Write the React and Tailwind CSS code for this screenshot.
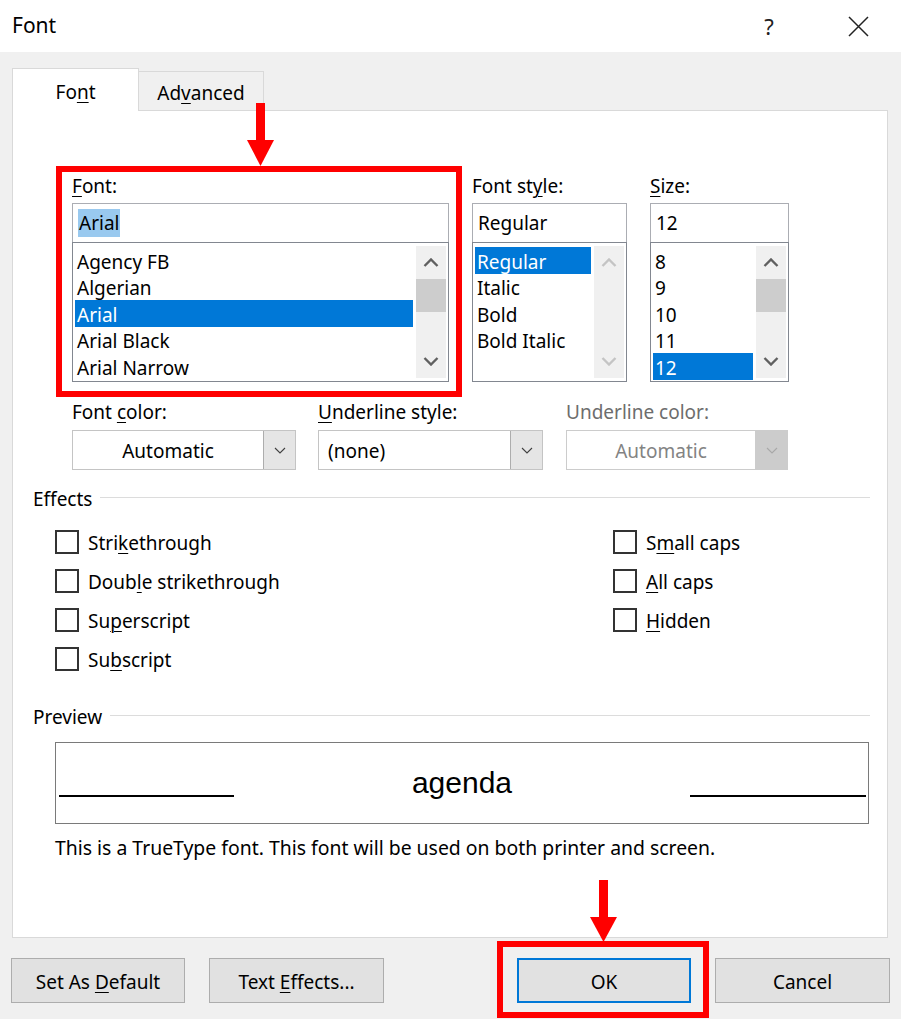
import React from "react";

const U = ({ children }) => (
  <span className="underline underline-offset-[3px] decoration-1">{children}</span>
);

function Chevron({ up, color }) {
  return (
    <svg width="16" height="9" viewBox="0 0 16 9">
      <path
        d={up ? "M1.5 8 L8 1.5 L14.5 8" : "M1.5 1 L8 7.5 L14.5 1"}
        fill="none"
        stroke={color}
        strokeWidth="2.4"
      />
    </svg>
  );
}

function Scrollbar({ thumb = true, disabled = false }) {
  const c = disabled ? "#c4c4c4" : "#606060";
  return (
    <div className="w-[30px] h-full bg-[#f0f0f0] flex flex-col">
      <div className="h-[33px] flex items-center justify-center">
        <Chevron up color={c} />
      </div>
      {thumb && <div className="h-[33px] bg-[#cdcdcd]" />}
      <div className="flex-1" />
      <div className="h-[33px] flex items-center justify-center">
        <Chevron color={c} />
      </div>
    </div>
  );
}

function ListBox({ items, selected, thumb, disabled }) {
  return (
    <div className="h-[140px] border border-[#828790] -mt-px bg-white flex pl-[2px] pr-[2px] py-[3px] gap-[3px]">
      <div className="flex-1 flex flex-col pt-[1px]">
        {items.map((it) => (
          <div
            key={it}
            className={
              "h-[26.5px] shrink-0 flex items-center px-[2px] pt-[4px] leading-none " +
              (it === selected ? "bg-[#0078d7] text-white" : "")
            }
          >
            {it}
          </div>
        ))}
      </div>
      <Scrollbar thumb={thumb} disabled={disabled} />
    </div>
  );
}

function Dropdown({ value, center, disabled }) {
  return (
    <div
      className={
        "h-[40px] flex border bg-white " +
        (disabled ? "border-[#cccccc]" : "border-[#c4c4c4]")
      }
    >
      <div
        className={
          "flex-1 flex items-center pt-[3px] " +
          (center ? "justify-center " : "pl-[9px] ") +
          (disabled ? "text-[#838383]" : "")
        }
      >
        {value}
      </div>
      <div
        className={
          "w-[32px] flex items-center justify-center border-l " +
          (disabled ? "bg-[#cccccc] border-[#cccccc]" : "bg-[#e5e5e5] border-[#adadad]")
        }
      >
        <svg width="12" height="7" viewBox="0 0 12 7">
          <path
            d="M1 1 L6 6 L11 1"
            fill="none"
            stroke={disabled ? "#a8a8a8" : "#404040"}
            strokeWidth="1.1"
          />
        </svg>
      </div>
    </div>
  );
}

function Check({ children }) {
  return (
    <div className="h-[39px] flex items-center">
      <div className="w-[24px] h-[24px] border-2 border-[#333333] bg-white" />
      <span className="ml-[9px] pt-[4px]">{children}</span>
    </div>
  );
}

function Btn({ children, w, primary }) {
  return (
    <div
      className={
        "h-[45px] flex items-center justify-center bg-[#e1e1e1] pt-[3px] " +
        (primary ? "border-2 border-[#0078d7] " : "border border-[#adadad] ") +
        w
      }
    >
      <span>{children}</span>
    </div>
  );
}

export default function App() {
  return (
    <div className="relative w-[901px] h-[1019px] bg-[#f0f0f0] overflow-hidden font-['Noto_Sans',sans-serif] text-[19px] text-black">
      {/* Title bar */}
      <div className="h-[52px] bg-white flex items-center">
        <div className="pl-[12px] text-[21px] -mt-[1px]">Font</div>
        <div className="ml-auto flex items-center mr-[23px]">
          <div className="w-[30px] text-center text-[22px] text-[#222]">?</div>
          <div className="w-[40px] ml-[54px] flex items-center justify-center">
            <svg width="21" height="21" viewBox="0 0 21 21">
              <path d="M1 1 L20 20 M20 1 L1 20" stroke="#222" strokeWidth="1.5" />
            </svg>
          </div>
        </div>
      </div>

      {/* Tabs */}
      <div className="mt-[16px] px-[12px] flex items-end">
        <div className="relative z-10 -mb-px w-[127px] h-[43px] bg-white border border-b-0 border-[#d9d9d9] flex items-center justify-center pt-[5px]">
          <span>
            Fo<U>n</U>t
          </span>
        </div>
        <div className="w-[125px] h-[39px] bg-[#f0f0f0] border border-l-0 border-b-0 border-[#d9d9d9] flex items-center justify-center pt-[5px]">
          <span>
            Ad<U>v</U>anced
          </span>
        </div>
      </div>

      {/* Panel */}
      <div className="mx-[12px] w-[876px] h-[828px] bg-white border border-[#d9d9d9] flex flex-col">
        {/* Font / style / size */}
        <div className="pt-[59px] pl-[59px] flex">
          <div className="w-[377px] flex flex-col">
            <div className="h-[33px] flex items-center">
              <span>
                <U>F</U>ont:
              </span>
            </div>
            <div className="h-[40px] border border-[#abadb3] flex items-center pl-[5px]">
              <span className="bg-[#99c9ef] px-[1px] leading-[28px]">Arial</span>
            </div>
            <ListBox
              items={["Agency FB", "Algerian", "Arial", "Arial Black", "Arial Narrow"]}
              selected="Arial"
              thumb
            />
          </div>
          <div className="w-[155px] ml-[23px] flex flex-col">
            <div className="h-[33px] flex items-center">
              <span>
                Font st<U>y</U>le:
              </span>
            </div>
            <div className="h-[40px] border border-[#abadb3] flex items-center pl-[5px]">
              Regular
            </div>
            <ListBox
              items={["Regular", "Italic", "Bold", "Bold Italic"]}
              selected="Regular"
              thumb={false}
              disabled
            />
          </div>
          <div className="w-[139px] ml-[23px] flex flex-col">
            <div className="h-[33px] flex items-center">
              <span>
                <U>S</U>ize:
              </span>
            </div>
            <div className="h-[40px] border border-[#abadb3] flex items-center pl-[5px]">
              12
            </div>
            <ListBox items={["8", "9", "10", "11", "12"]} selected="12" thumb />
          </div>
        </div>

        {/* Color / underline row */}
        <div className="mt-[15px] pl-[59px] flex">
          <div className="w-[224px] flex flex-col">
            <div className="h-[30px] flex items-center">
              <span>
                Font <U>c</U>olor:
              </span>
            </div>
            <div className="mt-[3px]">
              <Dropdown value="Automatic" center />
            </div>
          </div>
          <div className="w-[225px] ml-[22px] flex flex-col">
            <div className="h-[30px] flex items-center">
              <span>
                <U>U</U>nderline style:
              </span>
            </div>
            <div className="mt-[3px]">
              <Dropdown value="(none)" />
            </div>
          </div>
          <div className="w-[222px] ml-[23px] flex flex-col">
            <div className="h-[30px] flex items-center text-[#6d6d6d]">Underline color:</div>
            <div className="mt-[3px]">
              <Dropdown value="Automatic" center disabled />
            </div>
          </div>
        </div>

        {/* Effects */}
        <div className="mt-[13px] h-[30px] pl-[20px] pr-[17px] flex items-center">
          <span className="pt-[2px]">Effects</span>
          <div className="flex-1 h-px bg-[#dcdcdc] ml-[8px] -mt-[2px]" />
        </div>
        <div className="mt-[9px] pl-[42px] flex">
          <div className="w-[558px] flex flex-col">
            <Check>
              Stri<U>k</U>ethrough
            </Check>
            <Check>
              Doub<U>l</U>e strikethrough
            </Check>
            <Check>
              Su<U>p</U>erscript
            </Check>
            <Check>
              Su<U>b</U>script
            </Check>
          </div>
          <div className="flex flex-col">
            <Check>
              S<U>m</U>all caps
            </Check>
            <Check>
              <U>A</U>ll caps
            </Check>
            <Check>
              <U>H</U>idden
            </Check>
          </div>
        </div>

        {/* Preview */}
        <div className="mt-[23px] h-[30px] pl-[20px] pr-[17px] flex items-center">
          <span className="pt-[2px]">Preview</span>
          <div className="flex-1 h-px bg-[#dcdcdc] ml-[8px] -mt-[2px]" />
        </div>
        <div className="mt-[11px] ml-[42px] w-[814px] h-[82px] border border-[#7a7a7a] flex items-center justify-between pl-[3px] pr-[2px]">
          <div className="self-end mb-[26px] w-[175px] h-[2px] bg-black" />
          <span className="font-['Liberation_Sans',Arial,sans-serif] text-[30px] leading-none">
            agenda
          </span>
          <div className="self-end mb-[26px] w-[176px] h-[2px] bg-black" />
        </div>
        <div className="mt-[9px] ml-[42px] h-[26px] flex items-center pt-[3px] text-[19.4px]">
          This is a TrueType font. This font will be used on both printer and screen.
        </div>
      </div>

      {/* Buttons */}
      <div className="mt-[20px] flex">
        <div className="ml-[11px]">
          <Btn w="w-[174px]">
            Set As <U>D</U>efault
          </Btn>
        </div>
        <div className="ml-[24px]">
          <Btn w="w-[175px]">
            Text <U>E</U>ffects...
          </Btn>
        </div>
        <div className="ml-[133px]">
          <Btn w="w-[174px]" primary>
            OK
          </Btn>
        </div>
        <div className="ml-[24px]">
          <Btn w="w-[175px]">Cancel</Btn>
        </div>
      </div>

      {/* Annotations */}
      <div className="absolute left-[56px] top-[166px] w-[406px] h-[231px] border-[6px] border-[#ff0000]" />
      <svg className="absolute left-[246px] top-[103px]" width="29" height="64" viewBox="0 0 29 64">
        <rect x="10" y="0" width="9" height="40" fill="#ff0000" />
        <path d="M1 37 L28 37 L14.5 63 Z" fill="#ff0000" />
      </svg>
      <div className="absolute left-[497px] top-[941px] w-[212px] h-[77px] border-[6px] border-[#ff0000]" />
      <svg className="absolute left-[589px] top-[880px]" width="29" height="62" viewBox="0 0 29 62">
        <rect x="10" y="0" width="9" height="40" fill="#ff0000" />
        <path d="M1 37 L28 37 L14.5 62 Z" fill="#ff0000" />
      </svg>
    </div>
  );
}
